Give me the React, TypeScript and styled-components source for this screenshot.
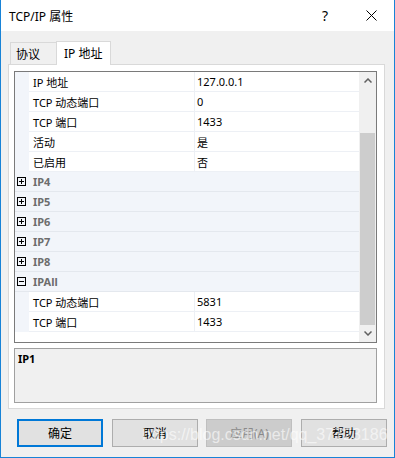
import React from "react";
import styled, { createGlobalStyle } from "styled-components";

const GlobalStyle = createGlobalStyle`
  html, body {
    margin: 0;
    padding: 0;
    background: #f0f0f0;
  }
  body {
    font-family: "Noto Sans", "Noto Sans CJK SC", sans-serif;
  }
`;

const Window = styled.div`
  position: relative;
  width: 395px;
  height: 458px;
  box-sizing: border-box;
  border: 1px solid #1883d7;
  border-top: none;
  display: flex;
  flex-direction: column;
  background: #f0f0f0;
  font-family: "Noto Sans", "Noto Sans CJK SC", sans-serif;
  color: #000;
  overflow: hidden;
`;

const TitleBar = styled.div`
  flex: none;
  height: 31px;
  display: flex;
  align-items: center;
  background: #fff;
`;

const Title = styled.div`
  flex: 1;
  padding-left: 8px;
  font-size: 12px;
`;

const CaptionButton = styled.div`
  width: 46px;
  height: 31px;
  display: flex;
  align-items: center;
  justify-content: center;
  font-size: 14px;
`;

const Body = styled.div`
  flex: 1;
  display: flex;
  flex-direction: column;
  padding: 10px 9px 0 7px;
`;

const TabStrip = styled.div`
  position: relative;
  z-index: 1;
  height: 23px;
  display: flex;
  align-items: flex-end;
  margin-left: 2px;
`;

const Tab = styled.div<{ $active?: boolean }>`
  box-sizing: border-box;
  display: flex;
  align-items: center;
  font-size: 12px;
  border: 1px solid #d9d9d9;
  border-bottom: none;
  width: ${(p) => (p.$active ? 55 : 46)}px;
  height: ${(p) => (p.$active ? 24 : 22)}px;
  margin-bottom: ${(p) => (p.$active ? -1 : 0)}px;
  padding-left: ${(p) => (p.$active ? 7 : 5)}px;
  padding-bottom: ${(p) => (p.$active ? 2 : 0)}px;
  background: ${(p) => (p.$active ? "#fff" : "#f0f0f0")};
  ${(p) => (p.$active ? "" : "border-right: none;")}
`;

const Panel = styled.div`
  box-sizing: border-box;
  height: 345px;
  border: 1px solid #d9d9d9;
  background: #fff;
  padding: 6px 7px 5px 5px;
  display: flex;
  flex-direction: column;
  gap: 5px;
`;

const Grid = styled.div`
  box-sizing: border-box;
  height: 272px;
  border: 1px solid #7a7a7a;
  background: #fff;
  display: flex;
`;

const RowList = styled.div`
  flex: 1;
  display: flex;
  flex-direction: column;
`;

const Row = styled.div`
  flex: none;
  height: 20px;
  display: flex;
  font-size: 11px;
`;

const Gutter = styled.div<{ $category?: boolean }>`
  box-sizing: border-box;
  width: 14px;
  flex: none;
  display: flex;
  align-items: center;
  padding-left: 2px;
  background: #f2f5fa;
  border-bottom: 1px solid ${(p) => (p.$category ? "#e4e8ee" : "#f2f5fa")};
`;

const CategoryCell = styled.div`
  flex: 1;
  display: flex;
  align-items: center;
  padding-left: 4px;
  background: #f2f5fa;
  border-bottom: 1px solid #e4e8ee;
  font-weight: bold;
  color: #6d6d6d;
`;

const LabelCell = styled.div`
  box-sizing: border-box;
  width: 165px;
  flex: none;
  display: flex;
  align-items: center;
  padding-left: 4px;
  border-bottom: 1px solid #edf0f5;
  white-space: nowrap;
`;

const ValueCell = styled.div`
  flex: 1;
  display: flex;
  align-items: center;
  padding-left: 2px;
  border-left: 1px solid #edf0f5;
  border-bottom: 1px solid #edf0f5;
  white-space: nowrap;
`;

const ScrollBar = styled.div`
  width: 17px;
  flex: none;
  display: flex;
  flex-direction: column;
  background: #f0f0f0;
`;

const ScrollArrow = styled.div`
  height: 17px;
  flex: none;
  display: flex;
  align-items: center;
  justify-content: center;
`;

const ScrollTrack = styled.div`
  flex: 1;
  display: flex;
  flex-direction: column;
  justify-content: flex-end;
`;

const ScrollThumb = styled.div<{ $size: number }>`
  height: ${(p) => p.$size}px;
  margin: 0 1px;
  background: #cdcdcd;
`;

const Description = styled.div`
  box-sizing: border-box;
  height: 55px;
  border: 1px solid #a0a0a0;
  background: #f0f0f0;
  padding: 2px 3px;
  font-size: 11px;
  line-height: 16px;
  font-weight: bold;
`;

const ButtonRow = styled.div`
  display: flex;
  justify-content: space-between;
  width: 370px;
  margin: 10px 0 0 9px;
`;

const Button = styled.button<{ $focused?: boolean }>`
  box-sizing: border-box;
  width: 86px;
  height: 28px;
  padding: 0;
  font-family: inherit;
  font-size: 12px;
  color: #000;
  background: #e1e1e1;
  border: 1px solid #adadad;
  ${(p) => (p.$focused ? "border: 2px solid #0078d7;" : "")}
  &:disabled {
    background: #cccccc;
    border-color: #bfbfbf;
    color: #8a8a8a;
  }
`;

const Watermark = styled.div`
  position: absolute;
  left: 141px;
  top: 427px;
  font-family: "Liberation Sans", Arial, sans-serif;
  font-size: 16px;
  line-height: 16px;
  color: rgba(255, 255, 255, 0.6);
  white-space: nowrap;
  pointer-events: none;
`;

function ExpandBox({ open }: { open: boolean }) {
  return (
    <svg width="9" height="9" viewBox="0 0 9 9" shapeRendering="crispEdges">
      <rect x="0.5" y="0.5" width="8" height="8" fill="none" stroke="#000" />
      <path d="M2 4.5h5" stroke="#000" />
      {!open && <path d="M4.5 2v5" stroke="#000" />}
    </svg>
  );
}

function Chevron({ up }: { up: boolean }) {
  return (
    <svg width="8" height="5" viewBox="0 0 8 5">
      <polyline
        points={up ? "0.5,4.5 4,1 7.5,4.5" : "0.5,0.5 4,4 7.5,0.5"}
        fill="none"
        stroke="#606060"
        strokeWidth="1.5"
      />
    </svg>
  );
}

type GridRow =
  | { kind: "prop"; label: string; value: string }
  | { kind: "cat"; label: string; open: boolean };

const rows: GridRow[] = [
  { kind: "prop", label: "IP 地址", value: "127.0.0.1" },
  { kind: "prop", label: "TCP 动态端口", value: "0" },
  { kind: "prop", label: "TCP 端口", value: "1433" },
  { kind: "prop", label: "活动", value: "是" },
  { kind: "prop", label: "已启用", value: "否" },
  { kind: "cat", label: "IP4", open: false },
  { kind: "cat", label: "IP5", open: false },
  { kind: "cat", label: "IP6", open: false },
  { kind: "cat", label: "IP7", open: false },
  { kind: "cat", label: "IP8", open: false },
  { kind: "cat", label: "IPAll", open: true },
  { kind: "prop", label: "TCP 动态端口", value: "5831" },
  { kind: "prop", label: "TCP 端口", value: "1433" },
];

export default function App() {
  return (
    <>
      <GlobalStyle />
      <Window>
        <TitleBar>
          <Title>TCP/IP 属性</Title>
          <CaptionButton>?</CaptionButton>
          <CaptionButton>
            <svg width="11" height="11" viewBox="0 0 11 11">
              <path d="M0.5 0.5L10.5 10.5M10.5 0.5L0.5 10.5" stroke="#000" strokeWidth="1" />
            </svg>
          </CaptionButton>
        </TitleBar>
        <Body>
          <TabStrip>
            <Tab>协议</Tab>
            <Tab $active>IP 地址</Tab>
          </TabStrip>
          <Panel>
            <Grid>
              <RowList>
                {rows.map((r, i) =>
                  r.kind === "cat" ? (
                    <Row key={i}>
                      <Gutter $category>
                        <ExpandBox open={r.open} />
                      </Gutter>
                      <CategoryCell>{r.label}</CategoryCell>
                    </Row>
                  ) : (
                    <Row key={i}>
                      <Gutter />
                      <LabelCell>{r.label}</LabelCell>
                      <ValueCell>{r.value}</ValueCell>
                    </Row>
                  )
                )}
              </RowList>
              <ScrollBar>
                <ScrollArrow>
                  <Chevron up />
                </ScrollArrow>
                <ScrollTrack>
                  <ScrollThumb $size={192} />
                </ScrollTrack>
                <ScrollArrow>
                  <Chevron up={false} />
                </ScrollArrow>
              </ScrollBar>
            </Grid>
            <Description>IP1</Description>
          </Panel>
          <ButtonRow>
            <Button $focused>确定</Button>
            <Button>取消</Button>
            <Button disabled>应用(A)</Button>
            <Button>帮助</Button>
          </ButtonRow>
        </Body>
        <Watermark>https://blog.csdn.net/qq_37723186</Watermark>
      </Window>
    </>
  );
}
